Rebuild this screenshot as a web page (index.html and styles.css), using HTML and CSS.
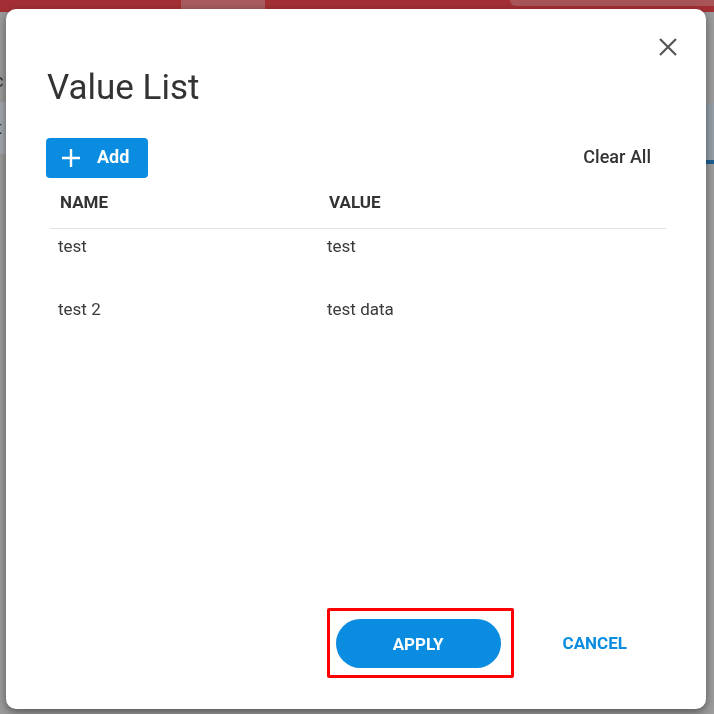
FILE: index.html
```html
<!DOCTYPE html>
<html>
<head>
<meta charset="utf-8">
<link rel="stylesheet" href="styles.css">
</head>
<body>
<div class="page">
  <div class="topbar">
    <div class="tab-light"></div>
    <div class="search-light"></div>
  </div>
  <div class="page-body">
    <div class="left-col">
      <div class="left-c">c</div>
      <div class="left-band">t</div>
    </div>
    <div class="right-col">
      <div class="right-band"></div>
      <div class="right-line"></div>
    </div>
  </div>
</div>

<div class="overlay">
  <div class="dialog">
    <button class="close" aria-label="Close">
      <svg width="20" height="20" viewBox="0 0 20 20"><path d="M2 2 L18 18 M18 2 L2 18" stroke="#555" stroke-width="2.2" stroke-linecap="butt" fill="none"/></svg>
    </button>
    <h1 class="title">Value List</h1>
    <div class="toolbar">
      <button class="add-btn">
        <svg width="18" height="18" viewBox="0 0 18 18"><path d="M9 0 V18 M0 9 H18" stroke="#fff" stroke-width="2.4" fill="none"/></svg>
        <span>Add</span>
      </button>
      <button class="clear-btn">Clear All</button>
    </div>
    <div class="table">
      <div class="thead">
        <div class="th th-name">NAME</div>
        <div class="th th-value">VALUE</div>
      </div>
      <div class="row">
        <div class="td td-name">test</div>
        <div class="td td-value">test</div>
      </div>
      <div class="row">
        <div class="td td-name">test 2</div>
        <div class="td td-value">test data</div>
      </div>
    </div>
    <div class="footer">
      <div class="highlight">
        <button class="apply-btn">APPLY</button>
      </div>
      <button class="cancel-btn">CANCEL</button>
    </div>
  </div>
</div>
</body>
</html>
```

FILE: styles.css
```css
* { box-sizing: border-box; }
html, body {
  margin: 0;
  padding: 0;
  width: 714px;
  height: 714px;
  overflow: hidden;
  font-family: Roboto, "Liberation Sans", Arial, sans-serif;
  background: #9b9b9b;
}
.page {
  width: 714px;
  height: 714px;
  display: flex;
  flex-direction: column;
}
.topbar {
  height: 12px;
  background: #a32f34;
  display: flex;
  position: relative;
}
.tab-light {
  margin-left: 181px;
  width: 84px;
  height: 12px;
  background: #a75b5e;
}
.search-light {
  margin-left: 245px;
  flex: 1;
  height: 6px;
  background: #a85558;
  border-bottom-left-radius: 8px;
}
.page-body {
  flex: 1;
  display: flex;
  justify-content: space-between;
}
.left-col {
  width: 8px;
  padding-top: 54px;
  display: flex;
  flex-direction: column;
  font-size: 18px;
  color: #333;
}
.left-c {
  height: 30px;
  line-height: 30px;
  margin-left: -6px;
  margin-bottom: 6px;
}
.left-band {
  height: 52px;
  background: #a4a9ae;
  line-height: 52px;
  margin-left: -4px;
  padding-left: 0;
}
.right-col {
  width: 8px;
  padding-top: 91px;
}
.right-band {
  height: 57px;
  background: #959ea7;
}
.right-line {
  height: 4px;
  background: #1d5e93;
}

.overlay {
  position: fixed;
  inset: 0;
  padding: 9px 8px 5px 6px;
  display: flex;
}
.dialog {
  position: relative;
  flex: 1;
  background: #fff;
  border-radius: 10px;
  box-shadow: 0 3px 8px rgba(0,0,0,0.45);
  padding: 59px 40px 31px 40px;
  display: flex;
  flex-direction: column;
}
button {
  font-family: inherit;
  border: none;
  background: none;
  padding: 0;
  cursor: pointer;
}
.close {
  position: absolute;
  top: 28px;
  right: 28px;
  width: 20px;
  height: 20px;
  display: flex;
}
.title {
  margin: 0 0 0 1px;
  font-size: 35px;
  font-weight: 400;
  line-height: 40px;
  color: #333;
}
.toolbar {
  margin-top: 30px;
  display: flex;
  justify-content: space-between;
  align-items: center;
}
.add-btn {
  height: 40px;
  width: 102px;
  background: #0a8ce0;
  border-radius: 4px;
  display: flex;
  align-items: center;
  padding: 0 0 0 16px;
  gap: 17px;
  color: #fff;
  font-size: 18px;
  font-weight: 700;
}
.add-btn span { line-height: 20px; margin-top: -3px; }
.clear-btn {
  font-size: 18px;
  font-weight: 500;
  color: #333;
  padding: 6px 15px 10px;
}
.table {
  flex: 1;
  margin-left: 4px;
}
.thead {
  display: flex;
  height: 51px;
  align-items: center;
  border-bottom: 1px solid #e2e2e2;
  padding-bottom: 2px;
}
.th {
  font-size: 17px;
  font-weight: 700;
  color: #333;
}
.th-name { width: 269px; padding-left: 10px; }
.th-value { padding-left: 10px; }
.row {
  display: flex;
  height: 63px;
  padding-top: 7px;
}
.td {
  font-size: 17px;
  line-height: 20px;
  color: #3a3a3a;
}
.td-name { width: 269px; padding-left: 8px; }
.td-value { padding-left: 8px; }
.footer {
  display: flex;
  justify-content: flex-end;
  align-items: center;
  padding-right: 23px;
}
.highlight {
  border: 3px solid #ff0000;
  border-radius: 2px;
  padding: 8px 10px 7px 6px;
}
.apply-btn {
  display: block;
  width: 165px;
  height: 49px;
  border-radius: 25px;
  background: #0a8ce0;
  color: #fff;
  font-size: 17px;
  font-weight: 700;
}
.cancel-btn {
  margin-left: 33px;
  padding: 8px 16px;
  color: #0a8ce0;
  font-size: 17px;
  font-weight: 700;
}
```
